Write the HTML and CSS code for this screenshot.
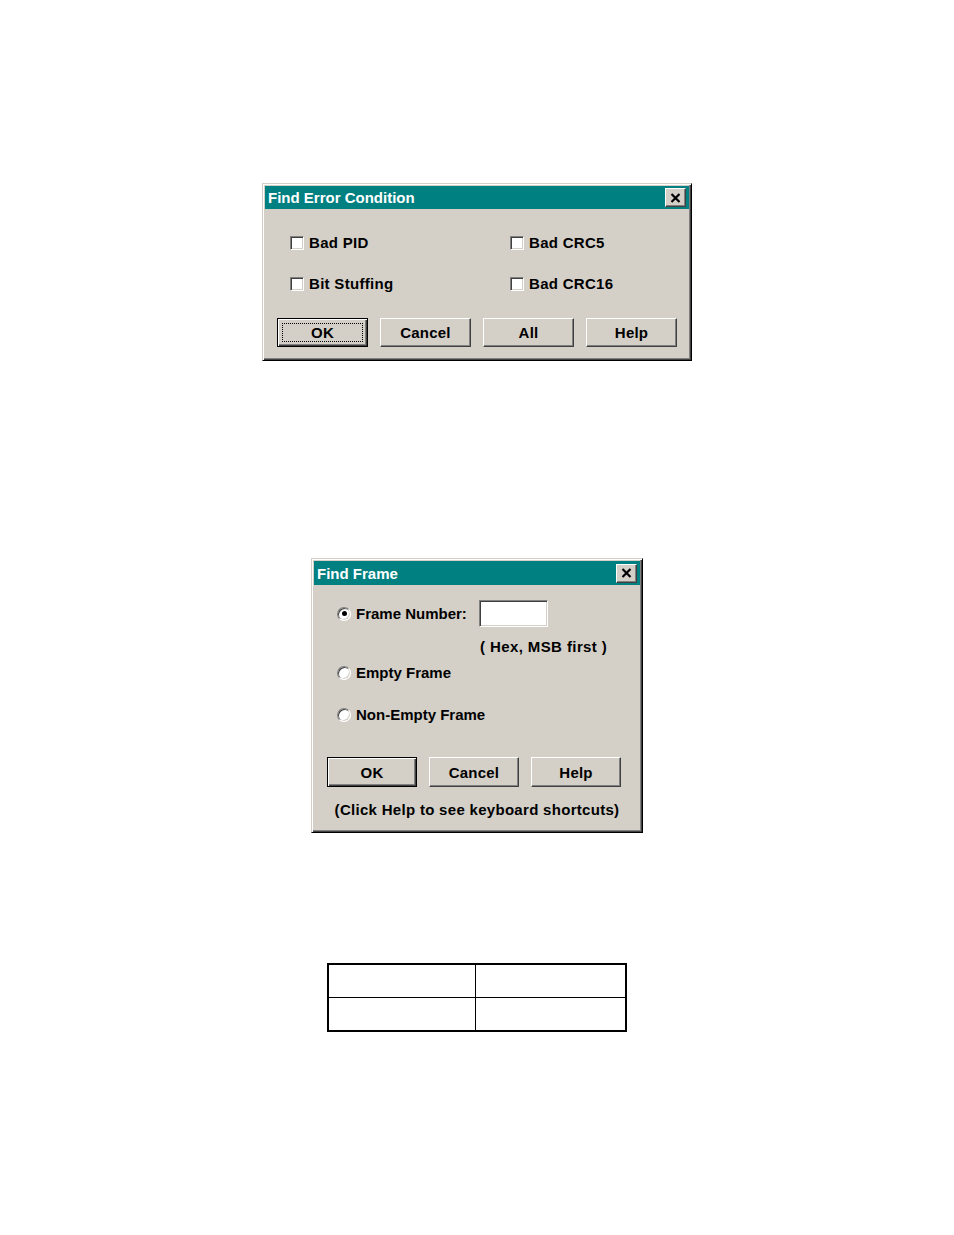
FILE: index.html
```html
<!DOCTYPE html>
<html>
<head>
<meta charset="utf-8">
<title>Find dialogs</title>
<link rel="stylesheet" href="styles.css">
</head>
<body>
<div class="page">
  <div class="dialog dlg-error">
    <div class="titlebar">
      <span class="title">Find Error Condition</span>
      <span class="close"><svg width="11" height="10" viewBox="0 0 11 10"><path d="M1.5 1 L9.5 9 M9.5 1 L1.5 9" stroke="#000" stroke-width="2.2" fill="none"/></svg></span>
    </div>
    <div class="checks">
      <label class="check"><span class="box"></span>Bad PID</label>
      <label class="check"><span class="box"></span>Bad CRC5</label>
      <label class="check"><span class="box"></span>Bit Stuffing</label>
      <label class="check"><span class="box"></span>Bad CRC16</label>
    </div>
    <div class="btnrow four">
      <div class="btn default"><span class="focus">OK</span></div>
      <div class="btn">Cancel</div>
      <div class="btn">All</div>
      <div class="btn">Help</div>
    </div>
  </div>

  <div class="dialog dlg-frame">
    <div class="titlebar tall">
      <span class="title">Find Frame</span>
      <span class="close"><svg width="11" height="10" viewBox="0 0 11 10"><path d="M1.5 1 L9.5 9 M9.5 1 L1.5 9" stroke="#000" stroke-width="2.2" fill="none"/></svg></span>
    </div>
    <div class="frame-row">
      <label class="radio-label fixed"><span class="radio on"><span class="dot"></span></span>Frame Number:</label>
      <span class="field"></span>
    </div>
    <div class="hint">( Hex, MSB first )</div>
    <label class="radio-label r-empty"><span class="radio"></span>Empty Frame</label>
    <label class="radio-label r-nonempty"><span class="radio"></span>Non-Empty Frame</label>
    <div class="btnrow three">
      <div class="btn default">OK</div>
      <div class="btn">Cancel</div>
      <div class="btn">Help</div>
    </div>
    <div class="footer">(Click Help to see keyboard shortcuts)</div>
  </div>

  <table class="grid">
    <tr><td class="c1"></td><td class="c2"></td></tr>
    <tr><td class="c1"></td><td class="c2"></td></tr>
  </table>
</div>
</body>
</html>
```
FILE: styles.css
```css
html, body {
  margin: 0;
  padding: 0;
  background: #ffffff;
}
.page {
  display: flex;
  flex-direction: column;
  align-items: center;
  font-family: "Liberation Sans", Arial, sans-serif;
  font-weight: bold;
  font-size: 15px;
  color: #000;
}
.dialog {
  box-sizing: border-box;
  background: #d4d0c8;
  border: 1px solid;
  border-color: #d4d0c8 #000000 #000000 #d4d0c8;
  box-shadow: inset 1px 1px #ffffff, inset -1px -1px #404040, inset -2px -2px #808080;
  padding: 2px;
  display: flex;
  flex-direction: column;
}
.dlg-error {
  width: 430px;
  height: 178px;
  margin-top: 183px;
}
.dlg-frame {
  width: 332px;
  height: 275px;
  margin-top: 197px;
}
.titlebar {
  height: 23px;
  background: #008080;
  color: #fff;
  display: flex;
  align-items: center;
  justify-content: space-between;
  padding: 0 3px 0 3px;
  flex: none;
}
.titlebar.tall {
  height: 24px;
}
.title {
  font-size: 15px;
  line-height: 23px;
}
.close {
  box-sizing: border-box;
  width: 21px;
  height: 19px;
  background: #d4d0c8;
  border: 1px solid;
  border-color: #ffffff #404040 #404040 #ffffff;
  box-shadow: inset -1px -1px #808080;
  display: flex;
  align-items: center;
  justify-content: center;
}
.checks {
  display: grid;
  grid-template-columns: 220px 1fr;
  row-gap: 27px;
  padding: 27px 0 0 25px;
}
.check {
  display: flex;
  align-items: center;
  height: 14px;
  line-height: 14px;
  letter-spacing: 0.3px;
}
.box {
  box-sizing: border-box;
  width: 14px;
  height: 14px;
  margin-right: 5px;
  background: #fff;
  border: 1px solid;
  border-color: #808080 #ffffff #ffffff #808080;
  box-shadow: inset 1px 1px #404040, inset -1px -1px #d4d0c8;
  flex: none;
}
.btnrow {
  display: grid;
  gap: 12px;
}
.btnrow.four {
  grid-template-columns: repeat(4, 91px);
  margin-top: 27px;
  padding-left: 12px;
}
.btnrow.three {
  grid-template-columns: repeat(3, 90px);
  margin-top: 35px;
  padding-left: 13px;
}
.btn {
  box-sizing: border-box;
  height: 29px;
  background: #d4d0c8;
  border: 1px solid;
  border-color: #ffffff #404040 #404040 #ffffff;
  box-shadow: inset -1px -1px #808080;
  display: flex;
  align-items: center;
  justify-content: center;
  letter-spacing: 0.2px;
}
.btnrow.three .btn {
  height: 30px;
}
.btn.default {
  border-color: #000;
  box-shadow: inset 1px 1px #ffffff, inset -1px -1px #404040, inset -2px -2px #808080;
}
.focus {
  flex: 1;
  align-self: stretch;
  margin: 4px;
  border: 1px dotted #000;
  display: flex;
  align-items: center;
  justify-content: center;
}
.frame-row {
  display: flex;
  align-items: center;
  height: 27px;
  margin-top: 15px;
  padding-left: 23px;
}
.radio-label {
  display: flex;
  align-items: center;
  height: 14px;
  line-height: 14px;
  letter-spacing: 0;
}
.radio-label.fixed {
  width: 142px;
}
.r-empty {
  margin-top: 11px;
  padding-left: 23px;
}
.r-nonempty {
  margin-top: 28px;
  padding-left: 23px;
}
.radio {
  box-sizing: border-box;
  width: 14px;
  height: 14px;
  border-radius: 50%;
  background: #fff;
  border: 1px solid;
  border-color: #808080 #ffffff #ffffff #808080;
  box-shadow: inset 1px 1px #404040, inset -1px -1px #d4d0c8;
  margin-right: 5px;
  display: flex;
  align-items: center;
  justify-content: center;
  flex: none;
}
.dot {
  width: 5px;
  height: 5px;
  border-radius: 50%;
  background: #000;
}
.field {
  box-sizing: border-box;
  width: 69px;
  height: 27px;
  background: #fff;
  border: 1px solid;
  border-color: #808080 #ffffff #ffffff #808080;
  box-shadow: inset 1px 1px #404040, inset -1px -1px #d4d0c8;
}
.hint {
  margin-top: 12px;
  height: 16px;
  line-height: 16px;
  padding-left: 166px;
  letter-spacing: 0.4px;
}
.footer {
  margin-top: 15px;
  height: 16px;
  line-height: 16px;
  text-align: center;
  letter-spacing: 0.3px;
}
.grid {
  margin-top: 130px;
  border-collapse: collapse;
  border: 2px solid #000;
}
.grid td {
  border: 1px solid #000;
  height: 32px;
  padding: 0;
}
.grid td.c1 {
  width: 146px;
}
.grid td.c2 {
  width: 149px;
}
```
